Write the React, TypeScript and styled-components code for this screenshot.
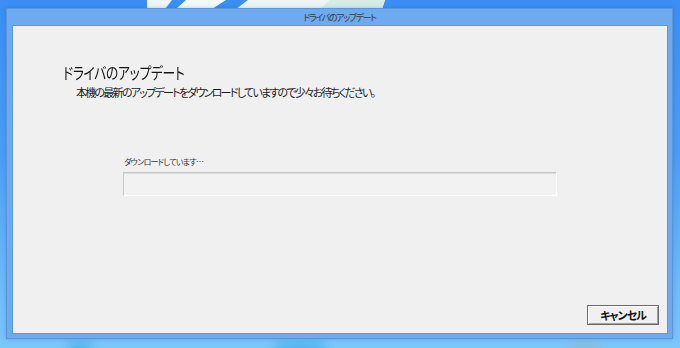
import React from "react";
import styled, { createGlobalStyle } from "styled-components";

const GlobalStyle = createGlobalStyle`
  html, body {
    margin: 0;
    padding: 0;
    width: 680px;
    height: 348px;
    overflow: hidden;
  }
  body {
    font-family: "Noto Sans CJK JP", "Noto Sans", sans-serif;
    font-feature-settings: "palt";
  }
`;

const Desktop = styled.div`
  position: relative;
  width: 680px;
  height: 348px;
  box-sizing: border-box;
  padding: 8px 7px 9px 6px;
  display: flex;
  background: linear-gradient(180deg, #3a8ef4 0%, #4a9ef6 45%, #6cbaf9 80%, #7cc6fa 100%);
`;

const Wallpaper = styled.svg`
  position: absolute;
  inset: 0;
  z-index: 0;
`;

const Window = styled.div`
  position: relative;
  z-index: 1;
  flex: 1;
  display: flex;
  flex-direction: column;
  background: #6daaf0;
  border: 1px solid #5a95da;
  box-shadow: 0 0 4px rgba(20, 70, 140, 0.25);
`;

const TitleBar = styled.div`
  height: 16px;
  display: flex;
  align-items: center;
  justify-content: center;
  font-size: 9px;
  color: #3a3a3a;
  letter-spacing: -1.4px;
`;

const Client = styled.div`
  flex: 1;
  margin: 0 4px 4px 5px;
  background: #f0f0f0;
  border: 1px solid #5d98dc;
  display: flex;
  flex-direction: column;
  padding: 36px 8px 8px 50px;
`;

const Heading = styled.h1`
  margin: 0;
  font-size: 16px;
  font-weight: 400;
  color: #141414;
  line-height: 20px;
  letter-spacing: -0.4px;
  transform: scaleX(0.8);
  transform-origin: left center;
`;

const Description = styled.p`
  margin: 2px 0 0 13px;
  font-size: 11px;
  color: #1c1c1c;
  line-height: 16px;
  letter-spacing: -1.75px;
`;

const ProgressSection = styled.div`
  margin: 56px 0 0 60px;
  width: 434px;
  display: flex;
  flex-direction: column;
  gap: 4px;
`;

const ProgressLabel = styled.span`
  font-size: 8px;
  color: #333;
  line-height: 12px;
  padding-left: 1px;
  letter-spacing: -0.7px;
`;

const ProgressTrack = styled.div`
  height: 24px;
  box-sizing: border-box;
  background: #f2f2f2;
  border-top: 1px solid #c6c6c6;
  border-left: 1px solid #c8c8c8;
  border-right: 1px solid #ffffff;
  border-bottom: 1px solid #ffffff;
  box-shadow: inset 0 1px 0 #dcdcdc;
`;

const Footer = styled.div`
  margin-top: auto;
  display: flex;
  justify-content: flex-end;
`;

const Button = styled.button`
  width: 72px;
  height: 20px;
  padding: 0;
  box-sizing: border-box;
  background: #f0f0f0;
  border: 1px solid #6a6a6a;
  box-shadow: inset 1px 1px 0 #ffffff, inset -1px -1px 0 #a0a0a0;
  font-family: "Noto Sans CJK JP", sans-serif;
  font-feature-settings: "palt";
  font-size: 11px;
  font-weight: 700;
  color: #111;
  letter-spacing: -1px;
  cursor: pointer;
`;

export default function App() {
  return (
    <>
      <GlobalStyle />
      <Desktop>
        <Wallpaper width="680" height="348" viewBox="0 0 680 348">
          <defs>
            <filter id="soft" x="-50%" y="-50%" width="200%" height="200%">
              <feGaussianBlur stdDeviation="5" />
            </filter>
          </defs>
          <polygon points="147,0 172,0 165,9 147,9" fill="#eef6f2" />
          <polygon points="186,0 226,0 212,9 176,9" fill="#f2f8f6" />
          <polygon points="248,0 385,0 382,9 236,9" fill="#eef6f3" />
          <polygon points="330,0 385,0 382,9 320,9" fill="#d8ece6" />
          <g filter="url(#soft)">
            <ellipse cx="80" cy="348" rx="14" ry="8" fill="#4aaee8" opacity="0.7" />
            <ellipse cx="300" cy="348" rx="28" ry="8" fill="#40b0ee" opacity="0.7" />
            <ellipse cx="585" cy="348" rx="18" ry="8" fill="#90b6cc" opacity="0.6" />
          </g>
        </Wallpaper>
        <Window>
          <TitleBar>ドライバのアップデート</TitleBar>
          <Client>
            <Heading>ドライバのアップデート</Heading>
            <Description>
              本機の最新のアップデートをダウンロードしていますので少々お待ちください。
            </Description>
            <ProgressSection>
              <ProgressLabel>ダウンロードしています…</ProgressLabel>
              <ProgressTrack />
            </ProgressSection>
            <Footer>
              <Button>キャンセル</Button>
            </Footer>
          </Client>
        </Window>
      </Desktop>
    </>
  );
}
